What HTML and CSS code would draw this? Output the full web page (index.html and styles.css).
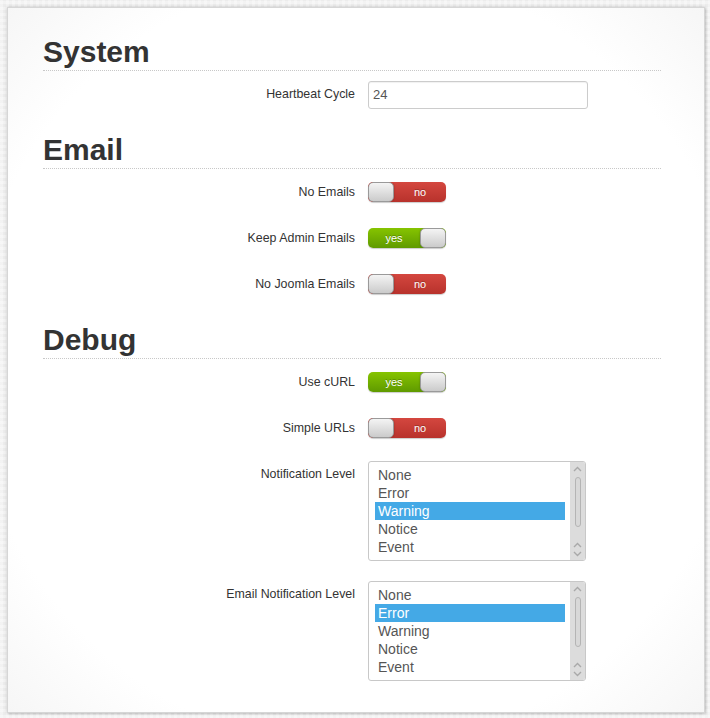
FILE: index.html
```html
<!DOCTYPE html>
<html>
<head>
<meta charset="utf-8">
<link rel="stylesheet" href="styles.css">
</head>
<body>
<div class="panel">
  <section class="section">
    <h2>System</h2>
    <div class="row">
      <label class="label">Heartbeat Cycle</label>
      <div class="input">24</div>
    </div>
  </section>
  <section class="section">
    <h2>Email</h2>
    <div class="row">
      <label class="label">No Emails</label>
      <div class="toggle off"><span class="knob"></span><span class="state">no</span></div>
    </div>
    <div class="row">
      <label class="label">Keep Admin Emails</label>
      <div class="toggle on"><span class="state">yes</span><span class="knob"></span></div>
    </div>
    <div class="row">
      <label class="label">No Joomla Emails</label>
      <div class="toggle off"><span class="knob"></span><span class="state">no</span></div>
    </div>
  </section>
  <section class="section">
    <h2>Debug</h2>
    <div class="row">
      <label class="label">Use cURL</label>
      <div class="toggle on"><span class="state">yes</span><span class="knob"></span></div>
    </div>
    <div class="row">
      <label class="label">Simple URLs</label>
      <div class="toggle off"><span class="knob"></span><span class="state">no</span></div>
    </div>
    <div class="row row-list">
      <label class="label">Notification Level</label>
      <div class="listbox">
        <div class="options">
          <div class="opt">None</div>
          <div class="opt">Error</div>
          <div class="opt sel">Warning</div>
          <div class="opt">Notice</div>
          <div class="opt">Event</div>
        </div>
        <div class="scroll">
          <svg class="arr" width="9" height="6" viewBox="0 0 9 6"><path d="M1 5 L4.5 1.5 L8 5" fill="none" stroke="#a9a9a9" stroke-width="1.4"/></svg>
          <div class="thumb"></div>
          <svg class="arr" width="9" height="6" viewBox="0 0 9 6"><path d="M1 5 L4.5 1.5 L8 5" fill="none" stroke="#a9a9a9" stroke-width="1.4"/></svg>
          <svg class="arr" width="9" height="6" viewBox="0 0 9 6"><path d="M1 1 L4.5 4.5 L8 1" fill="none" stroke="#a9a9a9" stroke-width="1.4"/></svg>
        </div>
      </div>
    </div>
    <div class="row row-list">
      <label class="label">Email Notification Level</label>
      <div class="listbox">
        <div class="options">
          <div class="opt">None</div>
          <div class="opt sel">Error</div>
          <div class="opt">Warning</div>
          <div class="opt">Notice</div>
          <div class="opt">Event</div>
        </div>
        <div class="scroll">
          <svg class="arr" width="9" height="6" viewBox="0 0 9 6"><path d="M1 5 L4.5 1.5 L8 5" fill="none" stroke="#a9a9a9" stroke-width="1.4"/></svg>
          <div class="thumb"></div>
          <svg class="arr" width="9" height="6" viewBox="0 0 9 6"><path d="M1 5 L4.5 1.5 L8 5" fill="none" stroke="#a9a9a9" stroke-width="1.4"/></svg>
          <svg class="arr" width="9" height="6" viewBox="0 0 9 6"><path d="M1 1 L4.5 4.5 L8 1" fill="none" stroke="#a9a9a9" stroke-width="1.4"/></svg>
        </div>
      </div>
    </div>
  </section>
</div>
</body>
</html>
```

FILE: styles.css
```css
* { box-sizing: border-box; }
html, body { margin: 0; height: 100%; }
body {
  padding: 7px 5px 5px 7px;
  font-family: "Liberation Sans", Arial, sans-serif;
  color: #333;
  background-color: #ececec;
  background-image:
    repeating-linear-gradient(0deg, rgba(255,255,255,0.35) 0 3px, transparent 3px 6px),
    repeating-linear-gradient(90deg, rgba(255,255,255,0.35) 0 3px, transparent 3px 6px);
}
.panel {
  width: 698px;
  height: 706px;
  background: radial-gradient(ellipse at center, #ffffff 78%, #f6f6f6 100%);
  border: 1px solid #d6d6d6;
  box-shadow: 0 0 3px rgba(0,0,0,0.18), 1px 1px 2px rgba(0,0,0,0.12);
  padding: 26px 43px 0 35px;
}
.section { display: flow-root; }
.section h2 {
  margin: 5px 0 10px;
  font-size: 30px;
  line-height: 36px;
  font-weight: bold;
  color: #333;
  border-bottom: 1px dotted #c8c8c8;
}
.section:first-child h2 { margin-top: 0; }
.row {
  display: flex;
  align-items: flex-start;
  gap: 13px;
  min-height: 28px;
  margin-bottom: 18px;
}
.row-list { margin-bottom: 20px; }
.label {
  width: 312px;
  text-align: right;
  font-size: 12.4px;
  line-height: 20px;
  padding-top: 3px;
  color: #333;
}
.input {
  width: 220px;
  height: 28px;
  border: 1px solid #cccccc;
  border-radius: 3px;
  box-shadow: inset 0 1px 1px rgba(0,0,0,0.06);
  font-size: 13px;
  line-height: 26px;
  padding-left: 4px;
  color: #555;
  background: #fff;
}
.toggle {
  margin-top: 3px;
  width: 78px;
  height: 20px;
  border-radius: 5px;
  display: flex;
  overflow: hidden;
  box-shadow: 0 1px 1px rgba(0,0,0,0.2);
}
.toggle.off { background: linear-gradient(#d4473f, #b8322c); }
.toggle.on { background: linear-gradient(#86c400, #5f9a00); }
.knob {
  width: 26px;
  height: 20px;
  flex: none;
  border: 1px solid #9a9a9a;
  border-radius: 5px;
  background: linear-gradient(#f4f4f4, #cbcbcb);
  box-shadow: 0 0 2px rgba(0,0,0,0.3);
}
.state {
  flex: 1;
  text-align: center;
  color: #fff;
  font-size: 11px;
  line-height: 20px;
  text-shadow: 0 -1px 0 rgba(0,0,0,0.25);
}
.listbox {
  width: 218px;
  height: 100px;
  border: 1px solid #c8c8c8;
  border-radius: 3px;
  display: flex;
  background: #fff;
}
.options {
  flex: 1;
  padding: 4px 5px 0 6px;
}
.opt {
  height: 18px;
  line-height: 18px;
  font-size: 14px;
  color: #555;
  padding-left: 3px;
}
.opt.sel {
  background: #44a9e6;
  color: #fff;
}
.scroll {
  width: 15px;
  background: #dcdcdc;
  display: flex;
  flex-direction: column;
  align-items: center;
  padding-top: 4px;
  border-radius: 0 2px 2px 0;
}
.arr { display: block; }
.thumb {
  width: 6px;
  height: 50px;
  margin: 5px 0 15px;
  border: 1px solid #b4b4b4;
  border-radius: 3px;
  background: #d8d8d8;
}
.scroll .arr + .arr { margin-top: 3px; }
```
